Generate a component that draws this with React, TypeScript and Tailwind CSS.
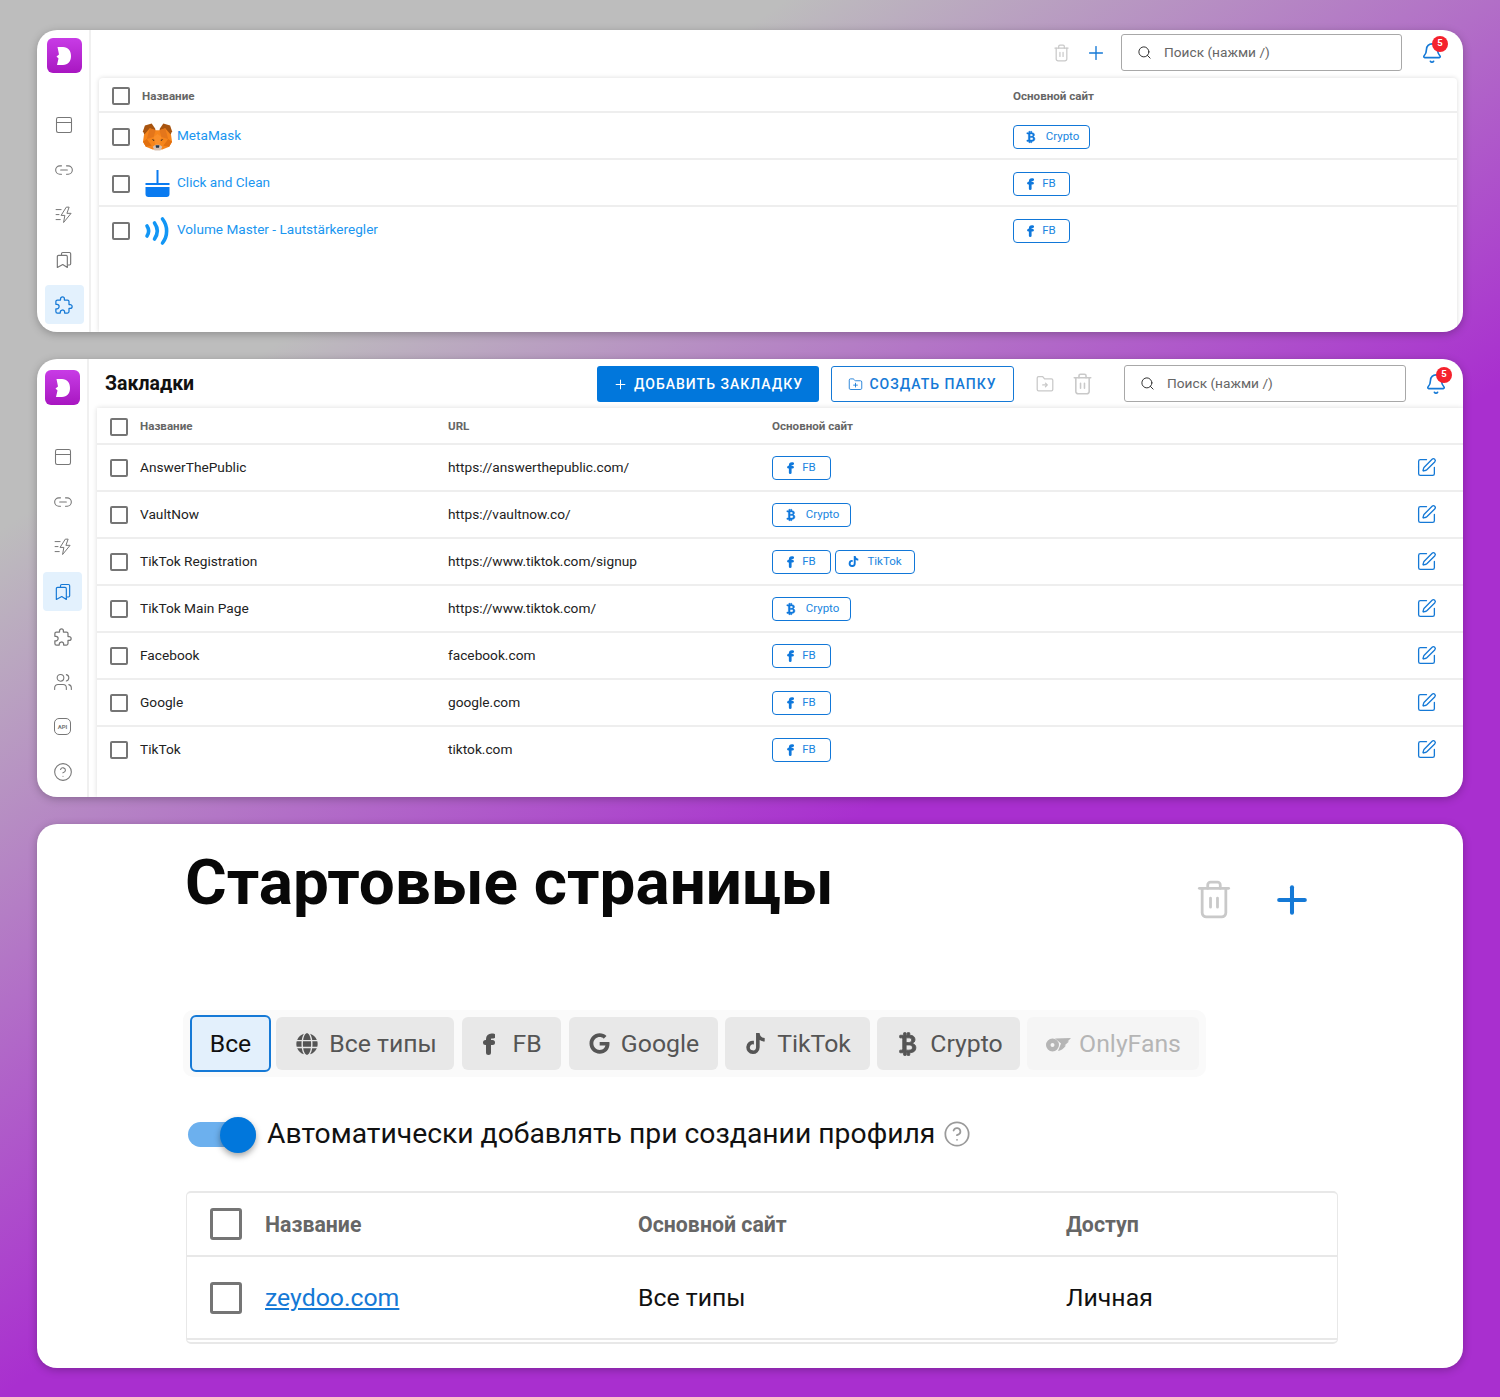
import { Bell, CircleHelp, FolderPlus, Link2, PanelTop, Plus, Search, SquarePen, Users } from "lucide-react";
import { BsCurrencyBitcoin } from "react-icons/bs";
import { FaGlobe, FaGoogle, FaTiktok } from "react-icons/fa";
import { IoExtensionPuzzleOutline } from "react-icons/io5";
import type { ReactNode } from "react";

type Site = "FB" | "Crypto" | "TikTok";

function TrashIcon({ className }: { className?: string }) {
  return (
    <svg viewBox="0 0 24 28" fill="none" stroke="currentColor" strokeWidth="2" strokeLinecap="round" strokeLinejoin="round" className={className}>
      <path d="M1.5 6h21" />
      <path d="M7.5 6V3.5A2 2 0 0 1 9.5 1.5h5a2 2 0 0 1 2 2V6" />
      <path d="M3.5 6v17.5a3 3 0 0 0 3 3h11a3 3 0 0 0 3-3V6" />
      <path d="M9.5 13v6.5M14.5 13v6.5" />
    </svg>
  );
}

function FolderMoveIcon() {
  return (
    <svg viewBox="0 0 24 24" fill="none" stroke="currentColor" strokeWidth="1.400" strokeLinecap="round" strokeLinejoin="round" className="ml-5 h-[22px] w-[22px] text-[#c9c9c9]">
      <path d="M3.500 5.500A1.500 1.500 0 0 1 5 4h4.500l2 2.500H19A1.500 1.500 0 0 1 20.500 8v10a1.500 1.500 0 0 1-1.500 1.500H5A1.500 1.500 0 0 1 3.500 18z" />
      <path d="M9.500 13h5M12.500 11l2 2-2 2" />
    </svg>
  );
}

function BrandF({ className }: { className?: string }) {
  return (
    <svg viewBox="0 0 12 22" fill="none" stroke="currentColor" strokeWidth="5" strokeLinecap="round" className={className}>
      <path d="M10 3H8.500A3 3 0 0 0 5.500 6v13.500" />
      <path d="M2.500 9.500h7" />
    </svg>
  );
}

function BoltIcon() {
  return (
    <svg viewBox="0 0 24 24" fill="none" stroke="currentColor" strokeWidth="1.2" strokeLinecap="round" strokeLinejoin="round" className="h-5 w-5">
      <path d="M14.5 3 8.5 12.5h4.5L11.5 21l9-11h-5l2.5-7z" />
      <path d="M2.5 5.5h6M2.5 11.5h3.5M2.5 17.5h5" />
    </svg>
  );
}

function BookmarksIcon() {
  return (
    <svg viewBox="0 0 24 24" fill="none" stroke="currentColor" strokeWidth="1.4" strokeLinecap="round" strokeLinejoin="round" className="h-5 w-5">
      <path d="M9 6.5V4.5a1.5 1.5 0 0 1 1.5-1.5h8A1.5 1.5 0 0 1 20 4.5v12a1.5 1.5 0 0 1-1.5 1.5H17" />
      <path d="M5.5 6.5h9A1.5 1.5 0 0 1 16 8v13l-5.500-3.500L4 21V8a1.500 1.500 0 0 1 1.500-1.500z" />
    </svg>
  );
}

function ApiIcon() {
  return (
    <span className="flex h-[17px] w-[17px] items-center justify-center rounded-[5px] border border-[#777] text-[6px] font-bold leading-none text-[#777]">
      API
    </span>
  );
}

function FoxIcon() {
  return (
    <svg viewBox="0 0 32 30" className="h-[30px] w-[31px] shrink-0">
      <polygon points="3,14 1,9 3,3 10,1 14,7 8,15" fill="#a8540f" />
      <polygon points="29,14 31,9 29,3 22,1 18,7 24,15" fill="#a8540f" />
      <polygon points="8,6 14,8 18,8 24,6 30,13 31,20 28,25 21,28 11,28 4,25 1,20 2,13" fill="#f6851b" />
      <polygon points="8,6 14,8 12,15 5,17" fill="#e4761b" />
      <polygon points="24,6 18,8 20,15 27,17" fill="#e4761b" />
      <polygon points="1,20 5,17 10,24 4,25" fill="#e2700f" />
      <polygon points="31,20 27,17 22,24 28,25" fill="#e2700f" />
      <polygon points="12,15 16,12 20,15 18,23 14,23" fill="#fa8f2a" />
      <polygon points="10,17 13,18 12,19" fill="#3a2a1d" />
      <polygon points="22,17 19,18 20,19" fill="#3a2a1d" />
      <polygon points="11,25 14,23 18,23 21,25 19,29 13,29" fill="#d7c1b3" />
      <polygon points="14,23.500 18,23.500 17.500,26 14.500,26" fill="#233447" />
    </svg>
  );
}

function BroomIcon() {
  return (
    <svg viewBox="0 0 26 28" fill="#0a7bf0" className="h-[28px] w-[31px] shrink-0">
      <rect x="12" y="0" width="2" height="15" />
      <rect x="1" y="13" width="24" height="2" />
      <path d="M1 17h24v7a3 3 0 0 1-3 3H4a3 3 0 0 1-3-3z" />
    </svg>
  );
}

function VolumeIcon() {
  return (
    <svg viewBox="0 0 28 30" fill="none" stroke="#1296f5" strokeLinecap="round" strokeWidth="3.600" className="h-[30px] w-[31px] shrink-0">
      <path d="M3.500 10c2 3 2 7 0 10" />
      <path d="M11 7c3.500 5 3.500 11 0 16" />
      <path d="M19 3c5.500 7 5.500 17 0 24" />
    </svg>
  );
}

function OnlyFansIcon() {
  return (
    <svg viewBox="0 0 26 16" fill="currentColor" className="h-4 w-[26px]">
      <path fillRule="evenodd" d="M7.500 2.500a6.500 6.500 0 1 1 0 13 6.500 6.500 0 0 1 0-13zm0 4.500a2 2 0 1 0 0 4 2 2 0 0 0 0-4z" />
      <path d="M10 2.500 26 2l-3.500 3.500H24l-4.500 4H21c-2.500 3.500-5.500 5-8 5.500l3-7.500z" />
    </svg>
  );
}

function LogoTile() {
  return (
    <div className="flex h-[35px] w-[35px] items-center justify-center rounded-[6px] bg-gradient-to-b from-[#c83be6] to-[#a815c1]">
      <svg viewBox="0 0 16 18" className="h-[18px] w-[16px]" fill="#fff">
        <path d="M1.500 0H7c5 0 8 3.500 8 9s-3 9-8 9H1l1.500-6.500L0.500 9.500 3 7.500z" />
      </svg>
    </div>
  );
}

function Checkbox({ big }: { big?: boolean }) {
  return big ? (
    <span className="block h-8 w-8 shrink-0 rounded-[3px] border-[3px] border-[#757575] bg-white" />
  ) : (
    <span className="block h-[18px] w-[18px] shrink-0 rounded-[2px] border-2 border-[#757575] bg-white" />
  );
}

function SiteBadge({ site, width }: { site: Site; width: string }) {
  return (
    <span className={`flex h-6 items-center justify-center gap-[8px] rounded-[4px] border border-[#1177d8] text-[11.500px] text-[#1a86e0] ${width}`}>
      {site === "FB" && <BrandF className="h-[12px] w-[7px] text-[#0f78dc]" />}
      {site === "Crypto" && <BsCurrencyBitcoin className="h-[14px] w-[14px] text-[#0f78dc]" stroke="currentColor" strokeWidth={0.5} />}
      {site === "TikTok" && <FaTiktok className="h-[11px] w-[11px] text-[#0f78dc]" />}
      {site}
    </span>
  );
}

function Notifications({ className }: { className: string }) {
  return (
    <div className={`relative ${className}`}>
      <Bell className="h-[22px] w-[22px] text-[#1579d6]" strokeWidth={1.800} />
      <span className="absolute -right-[5px] -top-[6px] flex h-4 w-4 items-center justify-center rounded-full bg-[#f5222d] text-[9.500px] font-bold text-white">
        5
      </span>
    </div>
  );
}

function SearchBox({ width }: { width: string }) {
  return (
    <div className={`flex h-[37px] items-center gap-[12px] rounded-[3px] border border-[#a8a8a8] pl-[15px] text-[13.700px] text-[#666] ${width}`}>
      <Search className="h-[15px] w-[15px] text-[#333]" strokeWidth={1.600} />
      Поиск (нажми /)
    </div>
  );
}

function NavItem({ icon, active }: { icon: ReactNode; active?: boolean }) {
  return (
    <div className={`flex h-[39px] w-[39px] items-center justify-center rounded-[4px] ${active ? "bg-[#e3f1fd] text-[#1579d6]" : "text-[#777]"}`}>
      {icon}
    </div>
  );
}

const navIcons = {
  panel: <PanelTop className="h-5 w-5" strokeWidth={1.300} />,
  link: <Link2 className="h-5 w-5" strokeWidth={1.300} />,
  bolt: <BoltIcon />,
  marks: <BookmarksIcon />,
  puzzle: <IoExtensionPuzzleOutline className="h-5 w-5" />,
  users: <Users className="h-5 w-5" strokeWidth={1.300} />,
  api: <ApiIcon />,
  help: <CircleHelp className="h-5 w-5" strokeWidth={1.300} />,
};

const extensions = [
  { name: "MetaMask", icon: <FoxIcon />, site: "Crypto" as Site, badge: "w-[77px]" },
  { name: "Click and Clean", icon: <BroomIcon />, site: "FB" as Site, badge: "w-[57px]" },
  { name: "Volume Master - Lautstärkeregler", icon: <VolumeIcon />, site: "FB" as Site, badge: "w-[57px]" },
];

const bookmarks: { name: string; url: string; sites: Site[] }[] = [
  { name: "AnswerThePublic", url: "https://answerthepublic.com/", sites: ["FB"] },
  { name: "VaultNow", url: "https://vaultnow.co/", sites: ["Crypto"] },
  { name: "TikTok Registration", url: "https://www.tiktok.com/signup", sites: ["FB", "TikTok"] },
  { name: "TikTok Main Page", url: "https://www.tiktok.com/", sites: ["Crypto"] },
  { name: "Facebook", url: "facebook.com", sites: ["FB"] },
  { name: "Google", url: "google.com", sites: ["FB"] },
  { name: "TikTok", url: "tiktok.com", sites: ["FB"] },
];

const badgeWidths: Record<Site, string> = { FB: "w-[59px]", Crypto: "w-[79px]", TikTok: "w-[80px]" };

const tabs = [
  { label: "Все типы", icon: <FaGlobe className="h-[22px] w-[22px]" />, width: "w-[178px] gap-[11px] pl-[3px]" },
  { label: "FB", icon: <BrandF className="h-[22px] w-[12px]" />, width: "ml-[1px] w-[99px] gap-[17px] pl-[2px]" },
  { label: "Google", icon: <FaGoogle className="h-[21px] w-[21px]" />, width: "ml-[1px] w-[149px] gap-[11px] pl-[1px]" },
  { label: "TikTok", icon: <FaTiktok className="h-[21px] w-[21px]" />, width: "w-[145px] gap-[11px] pl-[1px]" },
  { label: "Crypto", icon: <BsCurrencyBitcoin className="-mr-[3px] h-[28px] w-[28px]" stroke="currentColor" strokeWidth={0.5} />, width: "w-[143px] gap-[11px]" },
];

function ExtensionsCard() {
  return (
    <section className="flex h-[302px] overflow-hidden rounded-[20px] bg-white shadow-[0_2px_8px_rgba(0,0,0,0.25)]">
      <aside className="flex w-[54px] shrink-0 flex-col items-center border-r-2 border-[#f0f0f0] pl-[2px] pt-2">
        <LogoTile />
        <div className="mt-[32px] flex flex-col gap-[6px]">
          <NavItem icon={navIcons.panel} />
          <NavItem icon={navIcons.link} />
          <NavItem icon={navIcons.bolt} />
          <NavItem icon={navIcons.marks} />
          <NavItem icon={navIcons.puzzle} active />
        </div>
      </aside>
      <div className="flex min-w-0 flex-1 flex-col">
        <header className="flex h-12 shrink-0 items-center justify-end pb-[3px] pr-[20px]">
          <TrashIcon className="h-[18px] w-[15px] text-[#c9c9c9]" />
          <Plus className="ml-[16px] h-[22px] w-[22px] text-[#1579d6]" strokeWidth={1.500} />
          <div className="ml-[14px]">
            <SearchBox width="w-[281px]" />
          </div>
          <Notifications className="ml-[19px]" />
        </header>
        <div className="ml-2 mr-[6px] flex-1 rounded-t-[4px] shadow-[0_0_5px_rgba(0,0,0,0.14)]">
          <div className="grid h-[35px] grid-cols-[43px_871px_1fr] items-center border-b-2 border-[#eee] pt-[2px] text-[11.600px] font-bold text-[#666]">
            <div className="pl-[13px]"><Checkbox /></div>
            <span className="pt-[2px]">Название</span>
            <span className="pt-[2px]">Основной сайт</span>
          </div>
          {extensions.map((e) => (
            <div key={e.name} className="grid h-[47px] grid-cols-[43px_871px_1fr] items-center border-b-2 border-[#eee] pt-[2px] last:border-b-transparent">
              <div className="pl-[13px]"><Checkbox /></div>
              <div className="flex items-center gap-[4px] text-[13.600px] text-[#1a96f0]">
                {e.icon}
                <span className="-mt-[2px]">{e.name}</span>
              </div>
              <div>
                <SiteBadge site={e.site} width={e.badge} />
              </div>
            </div>
          ))}
        </div>
      </div>
    </section>
  );
}

function BookmarksCard() {
  return (
    <section className="flex h-[438px] overflow-hidden rounded-[20px] bg-white shadow-[0_2px_8px_rgba(0,0,0,0.25)]">
      <aside className="flex w-[52px] shrink-0 flex-col items-center border-r-2 border-[#f0f0f0] pl-[1px] pt-[11px]">
        <LogoTile />
        <div className="mt-[32px] flex flex-col gap-[6px]">
          <NavItem icon={navIcons.panel} />
          <NavItem icon={navIcons.link} />
          <NavItem icon={navIcons.bolt} />
          <NavItem icon={navIcons.marks} active />
          <NavItem icon={navIcons.puzzle} />
          <NavItem icon={navIcons.users} />
          <NavItem icon={navIcons.api} />
          <NavItem icon={navIcons.help} />
        </div>
      </aside>
      <div className="flex min-w-0 flex-1 flex-col">
        <header className="flex h-[49px] shrink-0 items-center pl-[16px]">
          <h2 className="w-[492px] text-[19.500px] font-bold text-[#111]">Закладки</h2>
          <button className="flex h-9 w-[222px] items-center justify-center gap-[6px] rounded-[3px] bg-[#0177dc] pt-[1px] text-[14px] font-medium tracking-[1px] text-white">
            <Plus className="h-[15px] w-[15px]" strokeWidth={1.600} />
            ДОБАВИТЬ ЗАКЛАДКУ
          </button>
          <button className="ml-3 flex h-9 w-[183px] items-center justify-center gap-[6px] rounded-[3px] border border-[#1579d6] pt-[1px] text-[14px] font-medium tracking-[1px] text-[#1579d6]">
            <FolderPlus className="h-[15px] w-[15px]" strokeWidth={1.400} />
            СОЗДАТЬ ПАПКУ
          </button>
          <FolderMoveIcon />
          <TrashIcon className="ml-[17px] h-[22px] w-[19px] text-[#c9c9c9]" />
          <div className="ml-[32px]">
            <SearchBox width="w-[282px]" />
          </div>
          <Notifications className="ml-[19px]" />
        </header>
        <div className="ml-2 flex-1 shadow-[0_0_5px_rgba(0,0,0,0.14)]">
          <div className="grid h-[37px] grid-cols-[43px_308px_324px_1fr] items-center border-b-2 border-[#eee] text-[11.600px] font-bold text-[#666]">
            <div className="pl-[13px] pt-[2px]"><Checkbox /></div>
            <span className="pt-[3px]">Название</span>
            <span className="pt-[3px]">URL</span>
            <span className="pt-[3px]">Основной сайт</span>
          </div>
          {bookmarks.map((b) => (
            <div key={b.name} className="grid h-[47px] grid-cols-[43px_308px_324px_1fr] items-center border-b-2 border-[#eee] text-[13.700px] text-[#222] last:border-b-transparent">
              <div className="pl-[13px]"><Checkbox /></div>
              <span className="-mt-[1px]">{b.name}</span>
              <span className="-mt-[1px]">{b.url}</span>
              <div className="flex items-center justify-between pr-[26px]">
                <div className="flex gap-1">
                  {b.sites.map((s) => <SiteBadge key={s} site={s} width={badgeWidths[s]} />)}
                </div>
                <SquarePen className="h-[21px] w-[21px] text-[#1579d6]" strokeWidth={1.500} />
              </div>
            </div>
          ))}
        </div>
      </div>
    </section>
  );
}

function StartPagesCard() {
  return (
    <section className="h-[544px] overflow-hidden rounded-[20px] bg-white pl-[149px] shadow-[0_2px_8px_rgba(0,0,0,0.25)]">
      <div className="flex h-[186px] items-start">
        <h1 className="-ml-[1px] mt-[16px] w-[1010px] text-[63.800px] font-bold leading-[86px] text-[#080808]">Стартовые страницы</h1>
        <TrashIcon className="ml-[2px] mt-[56px] h-[39px] w-[34px] text-[#c9c9c9]" />
        <Plus className="ml-[39px] mt-[54px] h-[44px] w-[44px] text-[#1579d6]" strokeWidth={2.200} />
      </div>
      <div className="-ml-[3px] flex h-[67px] w-[1023px] items-center gap-[7px] rounded-[10px] bg-[#fafafa] pl-[7px]">
        <div className="mr-[-2px] flex h-[57px] w-[81px] items-center justify-center rounded-[6px] border-2 border-[#1579d6] bg-[#e3f0fc] text-[24.700px] text-[#111]">
          Все
        </div>
        {tabs.map((t) => (
          <div key={t.label} className={`flex h-[53px] items-center justify-center rounded-[6px] bg-[#e8e8e8] text-[24.800px] text-[#555] ${t.width}`}>
            {t.icon}
            {t.label}
          </div>
        ))}
        <div className="flex h-[53px] w-[172px] items-center justify-center gap-[8px] rounded-[6px] bg-[#f5f5f5] text-[24.800px] text-[#b5b5b5]">
          <OnlyFansIcon />
          OnlyFans
        </div>
      </div>
      <div className="mt-[39px] flex h-9 items-center">
        <div className="relative ml-[2px] h-[25px] w-[68px] rounded-full bg-[#6cb0ee]">
          <span className="absolute -top-[5px] right-0 h-9 w-9 rounded-full bg-[#0177dc] shadow-[0_3px_6px_rgba(0,0,0,0.35)]" />
        </div>
        <span className="ml-[11px] text-[28.300px] text-[#111]">Автоматически добавлять при создании профиля</span>
        <CircleHelp className="ml-[8px] h-[28px] w-[28px] text-[#9a9a9a]" strokeWidth={1.500} />
      </div>
      <div className="mt-[39px] h-[153px] w-[1152px] rounded-[5px] border border-y-2 border-[#e8e8e8]">
        <div className="grid h-16 grid-cols-[78px_373px_428px_1fr] items-center border-b-2 border-[#e8e8e8] text-[21.300px] font-bold text-[#666]">
          <div className="pl-[23px]"><Checkbox big /></div>
          <span className="pt-[2px]">Название</span>
          <span className="pt-[2px]">Основной сайт</span>
          <span className="pt-[2px]">Доступ</span>
        </div>
        <div className="grid h-[83px] grid-cols-[78px_373px_428px_1fr] items-center border-b-2 border-[#e8e8e8] pt-[1px] text-[24.800px] text-[#111]">
          <div className="pl-[23px]"><Checkbox big /></div>
          <span className="text-[#1579d6] underline underline-offset-2">zeydoo.com</span>
          <span>Все типы</span>
          <span>Личная</span>
        </div>
      </div>
    </section>
  );
}

export default function App() {
  return (
    <div className="flex h-[1397px] flex-col gap-[27px] bg-[linear-gradient(146deg,#bdbdbd_22%,#a92fcf_58%)] px-[37px] pt-[30px] font-[Roboto,sans-serif]">
      <ExtensionsCard />
      <BookmarksCard />
      <StartPagesCard />
    </div>
  );
}
